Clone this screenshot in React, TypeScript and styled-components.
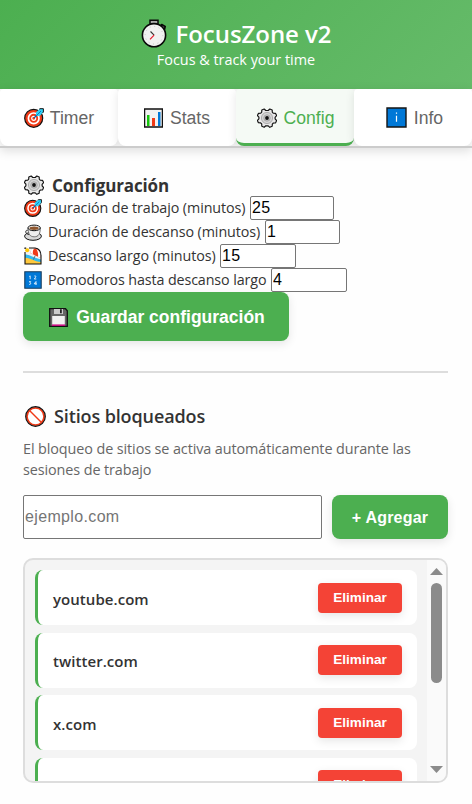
import React from 'react';
import styled, { createGlobalStyle } from 'styled-components';

const GlobalStyle = createGlobalStyle`
  * { box-sizing: border-box; }
  html, body { margin: 0; padding: 0; background: #fefefe; }
  body { height: 804px; overflow: hidden; color: #333; font-family: "Open Sans", "Noto Sans", sans-serif; }
  svg { display: block; flex: none; }
`;

const Page = styled.div`
  width: 472px;
  height: 804px;
  overflow: hidden;
  background: #fefefe;
`;

const Header = styled.header`
  height: 89px;
  padding-top: 17px;
  display: flex;
  flex-direction: column;
  align-items: center;
  color: #fff;
  background: linear-gradient(135deg, #4caf50, #66bb6a);
`;

const Title = styled.h1`
  margin: 0;
  height: 33px;
  padding-bottom: 1px;
  display: flex;
  align-items: center;
  gap: 8px;
  font-size: 24px;
  font-weight: 600;
  letter-spacing: -0.05px;
  white-space: nowrap;
`;

const Subtitle = styled.p`
  margin: 0;
  height: 20px;
  line-height: 20px;
  font-size: 14.4px;
  letter-spacing: 0;
  white-space: nowrap;
`;

const Tabs = styled.nav`
  display: grid;
  grid-template-columns: repeat(4, 1fr);
  height: 59px;
  border-bottom: 2px solid #ccc;
  background: #fafafa;
  box-shadow: 0 3px 10px rgba(0, 0, 0, 0.13);
`;

const Tab = styled.button<{ $active?: boolean }>`
  display: flex;
  align-items: center;
  justify-content: center;
  gap: 7px;
  padding: ${p => (p.$active ? '3px 0 0 1px' : '0')};
  border: 0;
  border-bottom: ${p => (p.$active ? '3px solid #4caf50' : '0')};
  border-radius: 8px;
  border-top-left-radius: 4px;
  border-top-right-radius: 4px;
  background: ${p => (p.$active ? '#f5faf5' : '#fff')};
  color: ${p => (p.$active ? '#4caf50' : '#666')};
  box-shadow: 0 2px 10px rgba(0, 0, 0, 0.1);
  clip-path: inset(0 -8px 0 -8px);
  font: 17.6px/20px "Liberation Sans", Arial, sans-serif;

  &:first-child { gap: 6px; }
  &:last-child { padding-left: 3px; }
`;

const Main = styled.main`
  padding: 26px 24px 0 23px;
`;

const Heading = styled.h2<{ $plain?: boolean }>`
  margin: 0;
  height: ${p => (p.$plain ? '30px' : '22px')};
  padding-left: ${p => (p.$plain ? '2px' : '1px')};
  display: flex;
  align-items: center;
  gap: 8px;
  font-size: ${p => (p.$plain ? '18px' : '17px')};
  font-weight: ${p => (p.$plain ? 600 : 700)};
  letter-spacing: ${p => (p.$plain ? '-0.12px' : '-0.13px')};
  white-space: nowrap;
`;

const Field = styled.label`
  display: flex;
  height: 24px;
  align-items: center;
  padding-left: 1px;
`;

const FieldText = styled.span<{ $width: number; $spacing: number }>`
  width: ${p => p.$width}px;
  margin-left: 6px;
  line-height: 24px;
  font-size: 14.3px;
  letter-spacing: ${p => p.$spacing}px;
  white-space: nowrap;
`;

const NumberInput = styled.input<{ $width: number }>`
  width: ${p => p.$width}px;
  height: 24px;
  padding: 0 1px 1px;
  border: 1px solid #767676;
  border-radius: 2px;
  background: #fff;
  color: #000;
  font: 16px "Liberation Sans", Arial, sans-serif;
  letter-spacing: 0.3px;
`;

const SaveButton = styled.button`
  display: flex;
  align-items: center;
  justify-content: center;
  gap: 8px;
  width: 266px;
  height: 49px;
  padding: 2px 0 0 2px;
  border: 0;
  border-radius: 8px;
  background: #4caf50;
  color: #fff;
  box-shadow: 0 3px 10px rgba(0, 0, 0, 0.1);
  font: bold 17.5px "Liberation Sans", Arial, sans-serif;
  white-space: nowrap;
`;

const Divider = styled.hr`
  height: 2px;
  margin: 30px 0 28px;
  border: 0;
  background: #ddd;
`;

const Hint = styled.p`
  margin: 7px 0 15px;
  height: 42px;
  color: #666;
  font-size: 14.4px;
  line-height: 21px;
  letter-spacing: -0.1px;
  white-space: nowrap;
`;

const AddRow = styled.div`
  display: flex;
  gap: 10px;
  height: 44px;
`;

const SiteInput = styled.input`
  flex: 1;
  min-width: 0;
  padding: 0 1px;
  border: 1px solid #767676;
  border-radius: 2px;
  background: #fff;
  font: 16px "Liberation Sans", Arial, sans-serif;
  letter-spacing: 0.35px;
  &::placeholder { color: #757575; opacity: 1; }
`;

const AddButton = styled.button`
  width: 116px;
  padding: 1px 0 0;
  border: 0;
  border-radius: 8px;
  background: #4caf50;
  color: #fff;
  box-shadow: 0 3px 10px rgba(0, 0, 0, 0.1);
  font: bold 16px "Liberation Sans", Arial, sans-serif;
  letter-spacing: 0.2px;
`;

const ListBox = styled.div`
  display: flex;
  height: 225px;
  margin-top: 19px;
  border: 2px solid #ddd;
  border-radius: 10px;
  background: #f4f4f4;
  overflow: hidden;
`;

const SiteList = styled.ul`
  flex: 1;
  display: flex;
  flex-direction: column;
  gap: 7.6px;
  margin: 0;
  padding: 10px;
  list-style: none;
`;

const Site = styled.li`
  flex: none;
  display: flex;
  align-items: center;
  justify-content: space-between;
  height: 55px;
  padding: 0 15px;
  border-left: 3px solid #4caf50;
  border-radius: 8px;
  background: #fff;
`;

const SiteName = styled.span`
  padding-top: 2px;
  font-size: 15px;
  font-weight: 600;
  letter-spacing: 0.05px;
`;

const RemoveButton = styled.button`
  width: 84px;
  height: 30px;
  padding: 0 0 1px;
  border: 0;
  border-radius: 4px;
  background: #f44336;
  color: #fff;
  box-shadow: 0 3px 10px rgba(0, 0, 0, 0.1);
  font: bold 13.6px "Liberation Sans", Arial, sans-serif;
`;

const Scrollbar = styled.div`
  width: 19px;
  padding: 8px 0;
  display: flex;
  flex-direction: column;
  align-items: center;
  background: #fafafa;
`;

const Thumb = styled.div`
  width: 11px;
  height: 100px;
  margin: 8px 0 auto;
  border-radius: 5.5px;
  background: #8b8b8b;
`;

type IconProps = { size?: number };

const Target = ({ size = 20 }: IconProps) => (
  <svg width={size} height={size} viewBox="0 0 20 20">
    <circle cx="9.7" cy="10.3" r="9" fill="#f03a17" stroke="#111" strokeWidth="1.2" />
    <circle cx="9.7" cy="10.3" r="5.3" fill="none" stroke="#fff" strokeWidth="1.7" />
    <circle cx="9.7" cy="10.3" r="2" fill="#f03a17" stroke="#fff" strokeWidth="1.2" />
    <path d="M10 10 14 6" stroke="#0063b1" strokeWidth="1.2" />
    <path d="M12 8V4.2L16 .8h3.3v3.3L15.8 8Z" fill="#31d2f7" />
    <path d="M15.2 1.2 16 .7h3.4V4l-1 1.2" fill="none" stroke="#111" strokeWidth="1" />
    <path d="m11 9 6-6" stroke="#0063b1" strokeWidth=".8" />
  </svg>
);

const Chart = () => (
  <svg width="19" height="20" viewBox="0 0 19 20">
    <path d="M.6 1h17.8v18H.6Z" fill="#f2f2f2" stroke="#111" strokeWidth="1.3" />
    <path d="M3 7h2.5v11H3Z" fill="#16c60c" />
    <path d="M8 10h3v8H8Z" fill="#f03a17" />
    <path d="M14 4h2.5v14H14Z" fill="#0078d7" />
  </svg>
);

const Gear = ({ size = 20 }: IconProps) => (
  <svg width={size} height={size} viewBox="0 0 20 20">
    <path
      d="m7.2 1 1.6 1.5h2.4L12.8 1l2.4 1 .1 2.2 1.1 1.1 2.2.1 1 2.2-1.5 1.7v1.6l1.5 1.6-1 2.4-2.2.1-1.1 1.1-.1 2.2-2.4 1-1.6-1.5H8.8L7.2 19.2l-2.4-1-.1-2.2-1.1-1.1-2.2-.1-1-2.4 1.5-1.6V9.2L.4 7.6l1-2.2 2.2-.1 1.1-1.1L4.8 2Z"
      fill="#e8e8e8" stroke="#111" strokeWidth="1.15" strokeLinejoin="round"
    />
    <circle cx="10" cy="10" r="5.6" fill="#d4d4d4" stroke="#a0a0a0" strokeWidth=".8" />
    <circle cx="10" cy="10" r="3.2" fill="#c8c8c8" stroke="#999" strokeWidth=".7" />
    <circle cx="10" cy="10" r="1.9" fill="#111" />
  </svg>
);

const InfoIcon = () => (
  <svg width="21" height="21" viewBox="0 0 21 21">
    <path d="M1 1h19v19H1Z" fill="#0078d7" stroke="#151515" strokeWidth="1.4" />
    <path d="M9.9 6.2h1.2M10.5 8.7v6" stroke="#fff" strokeWidth="1.2" />
  </svg>
);

const Stopwatch = () => (
  <svg width="27" height="29" viewBox="0 0 27 29">
    <path d="M9 1.2h8v4h-2v3h-4v-3H9Z" fill="#aaa" stroke="#080808" strokeWidth="1.5" />
    <path d="m19.5 7.2 1.2-1.6 3.5 1.8-.8 3.5" fill="#666" stroke="#080808" strokeWidth="1.7" strokeLinejoin="round" />
    <circle cx="13" cy="16.2" r="11.6" fill="#f1f1f1" stroke="#080808" strokeWidth="1.6" />
    <circle cx="13" cy="16.2" r="8.8" fill="none" stroke="#c4c4c4" strokeWidth="1" strokeDasharray="1 3.6" />
    <path d="m9.5 12.5 3.6 3.6" stroke="#333" strokeWidth="1.1" />
    <path d="m13.1 16.1-4.1 4.2" stroke="#e81224" strokeWidth="1.1" />
  </svg>
);

const Coffee = () => (
  <svg width="18" height="17" viewBox="0 0 18 17">
    <ellipse cx="9" cy="12.2" rx="8.4" ry="4.1" fill="#d8d8d8" stroke="#111" strokeWidth="1" />
    <path d="M4.5 6.4C.6 5.2.7 10.4 5.4 10.6" fill="none" stroke="#333" strokeWidth="1" />
    <path d="M4 4c.2 6 2 8.8 6.3 8.8 4 0 6-2.8 6-8.8Z" fill="#eee" stroke="#555" strokeWidth=".8" />
    <ellipse cx="10.1" cy="3.9" rx="6.2" ry="2.8" fill="#f2f2f2" stroke="#111" strokeWidth="1" />
    <ellipse cx="10.1" cy="4.3" rx="4.6" ry="1.7" fill="#8e562e" />
  </svg>
);

const Beach = () => (
  <svg width="18" height="18" viewBox="0 0 18 18">
    <path d="M1 1h9c5 0 7 4 7 8v8H1Z" fill="#f2f2f2" />
    <path d="M1 7.5c5 0 9 3.5 16 5V17H1Z" fill="#31b9ed" />
    <path d="M1 10.8c6 .2 9 4 16 4.3V17H1Z" fill="#ffc83d" />
    <path d="M6.2 6C6.8 2.5 9 1.2 11.5 1.4c3 .6 5 4 5 9.6Z" fill="#f03a17" />
    <path d="M6.2 6c.2-2.8 1.5-4.4 4-4.5C8.8 3.2 8.6 5 9 7.3Z" fill="#fff" />
    <path d="M14 9.8c.4-3-.1-5.8-1.8-7.9 3 1 4.4 4.3 4.4 9.1Z" fill="#fff" />
    <circle cx="3.2" cy="3.2" r="2" fill="#ffc800" />
    <path d="m11.2 8.5-1.7 4" stroke="#555" strokeWidth=".8" />
    <path d="M5 1h6c4 .5 6 3.8 6 7.8V17H1V5M1 2V1h1.2" fill="none" stroke="#111" strokeWidth="1.1" />
  </svg>
);

const Numbers = () => (
  <svg width="18" height="18" viewBox="0 0 18 18">
    <path d="M.8.8h16.4v16.4H.8Z" fill="#0078d7" stroke="#173c5c" strokeWidth="1.1" />
    <path d="m5.2 5.5 1-.6v3.3M10.3 5c2-.7 2 .8 0 3h2M5 10.6h1.7l-.8 1.3c1.6.4.7 2-.9 1.4M12 14v-3.5l-1.8 2.3h2.5" fill="none" stroke="#fff" strokeWidth=".8" />
  </svg>
);

const Floppy = () => (
  <svg width="19" height="19" viewBox="0 0 19 19">
    <path d="M.7.7h15.8l1.8 2v15.6H.7Z" fill="#666" stroke="#111" strokeWidth="1.3" />
    <path d="M5 1h9v5H5Z" fill="#ccc" />
    <path d="M11 1.2h1.8v4H11Z" fill="#222" />
    <path d="M3.2 8h12.6v8.8H3.2Z" fill="#f2f2f2" />
    <path d="M3 16.5h13v1.3H3Z" fill="#e3008c" />
  </svg>
);

const Prohibited = () => (
  <svg width="21" height="21" viewBox="0 0 21 21">
    <circle cx="10.5" cy="10.5" r="8.6" fill="#fff" stroke="#f03a17" strokeWidth="1.9" />
    <path d="m4.5 4.5 12 12" stroke="#f03a17" strokeWidth="1.4" />
    <circle cx="10.5" cy="10.5" r="9.8" fill="none" stroke="#111" strokeWidth="1.2" />
  </svg>
);

const Arrow = ({ down = false }: { down?: boolean }) => (
  <svg width="13" height="7" viewBox="0 0 13 7">
    <path d={down ? 'M0 0h13L6.5 7Z' : 'M0 7h13L6.5 0Z'} fill="#8b8b8b" />
  </svg>
);

const fields = [
  { icon: <Target size={18} />, text: 'Duración de trabajo (minutos)', value: 25, labelWidth: 202, inputWidth: 84, spacing: -0.08 },
  { icon: <Coffee />, text: 'Duración de descanso (minutos)', value: 1, labelWidth: 217, inputWidth: 75, spacing: -0.08 },
  { icon: <Beach />, text: 'Descanso largo (minutos)', value: 15, labelWidth: 172, inputWidth: 76, spacing: -0.04 },
  { icon: <Numbers />, text: 'Pomodoros hasta descanso largo', value: 4, labelWidth: 223, inputWidth: 76, spacing: -0.11 },
];

const sites = ['youtube.com', 'twitter.com', 'x.com', 'instagram.com'];

export default function App() {
  return (
    <Page>
      <GlobalStyle />
      <Header>
        <Title><Stopwatch />FocusZone v2</Title>
        <Subtitle>Focus &amp; track your time</Subtitle>
      </Header>
      <Tabs>
        <Tab><Target size={20} />Timer</Tab>
        <Tab><Chart />Stats</Tab>
        <Tab $active><Gear />Config</Tab>
        <Tab><InfoIcon />Info</Tab>
      </Tabs>
      <Main>
        <Heading><Gear />Configuración</Heading>
        {fields.map(f => (
          <Field key={f.text}>
            {f.icon}
            <FieldText $width={f.labelWidth} $spacing={f.spacing}>{f.text}</FieldText>
            <NumberInput $width={f.inputWidth} defaultValue={f.value} />
          </Field>
        ))}
        <SaveButton><Floppy />Guardar configuración</SaveButton>
        <Divider />
        <Heading $plain><Prohibited />Sitios bloqueados</Heading>
        <Hint>El bloqueo de sitios se activa automáticamente durante las<br />sesiones de trabajo</Hint>
        <AddRow>
          <SiteInput placeholder="ejemplo.com" />
          <AddButton>+ Agregar</AddButton>
        </AddRow>
        <ListBox>
          <SiteList>
            {sites.map(site => (
              <Site key={site}>
                <SiteName>{site}</SiteName>
                <RemoveButton>Eliminar</RemoveButton>
              </Site>
            ))}
          </SiteList>
          <Scrollbar><Arrow /><Thumb /><Arrow down /></Scrollbar>
        </ListBox>
      </Main>
    </Page>
  );
}
